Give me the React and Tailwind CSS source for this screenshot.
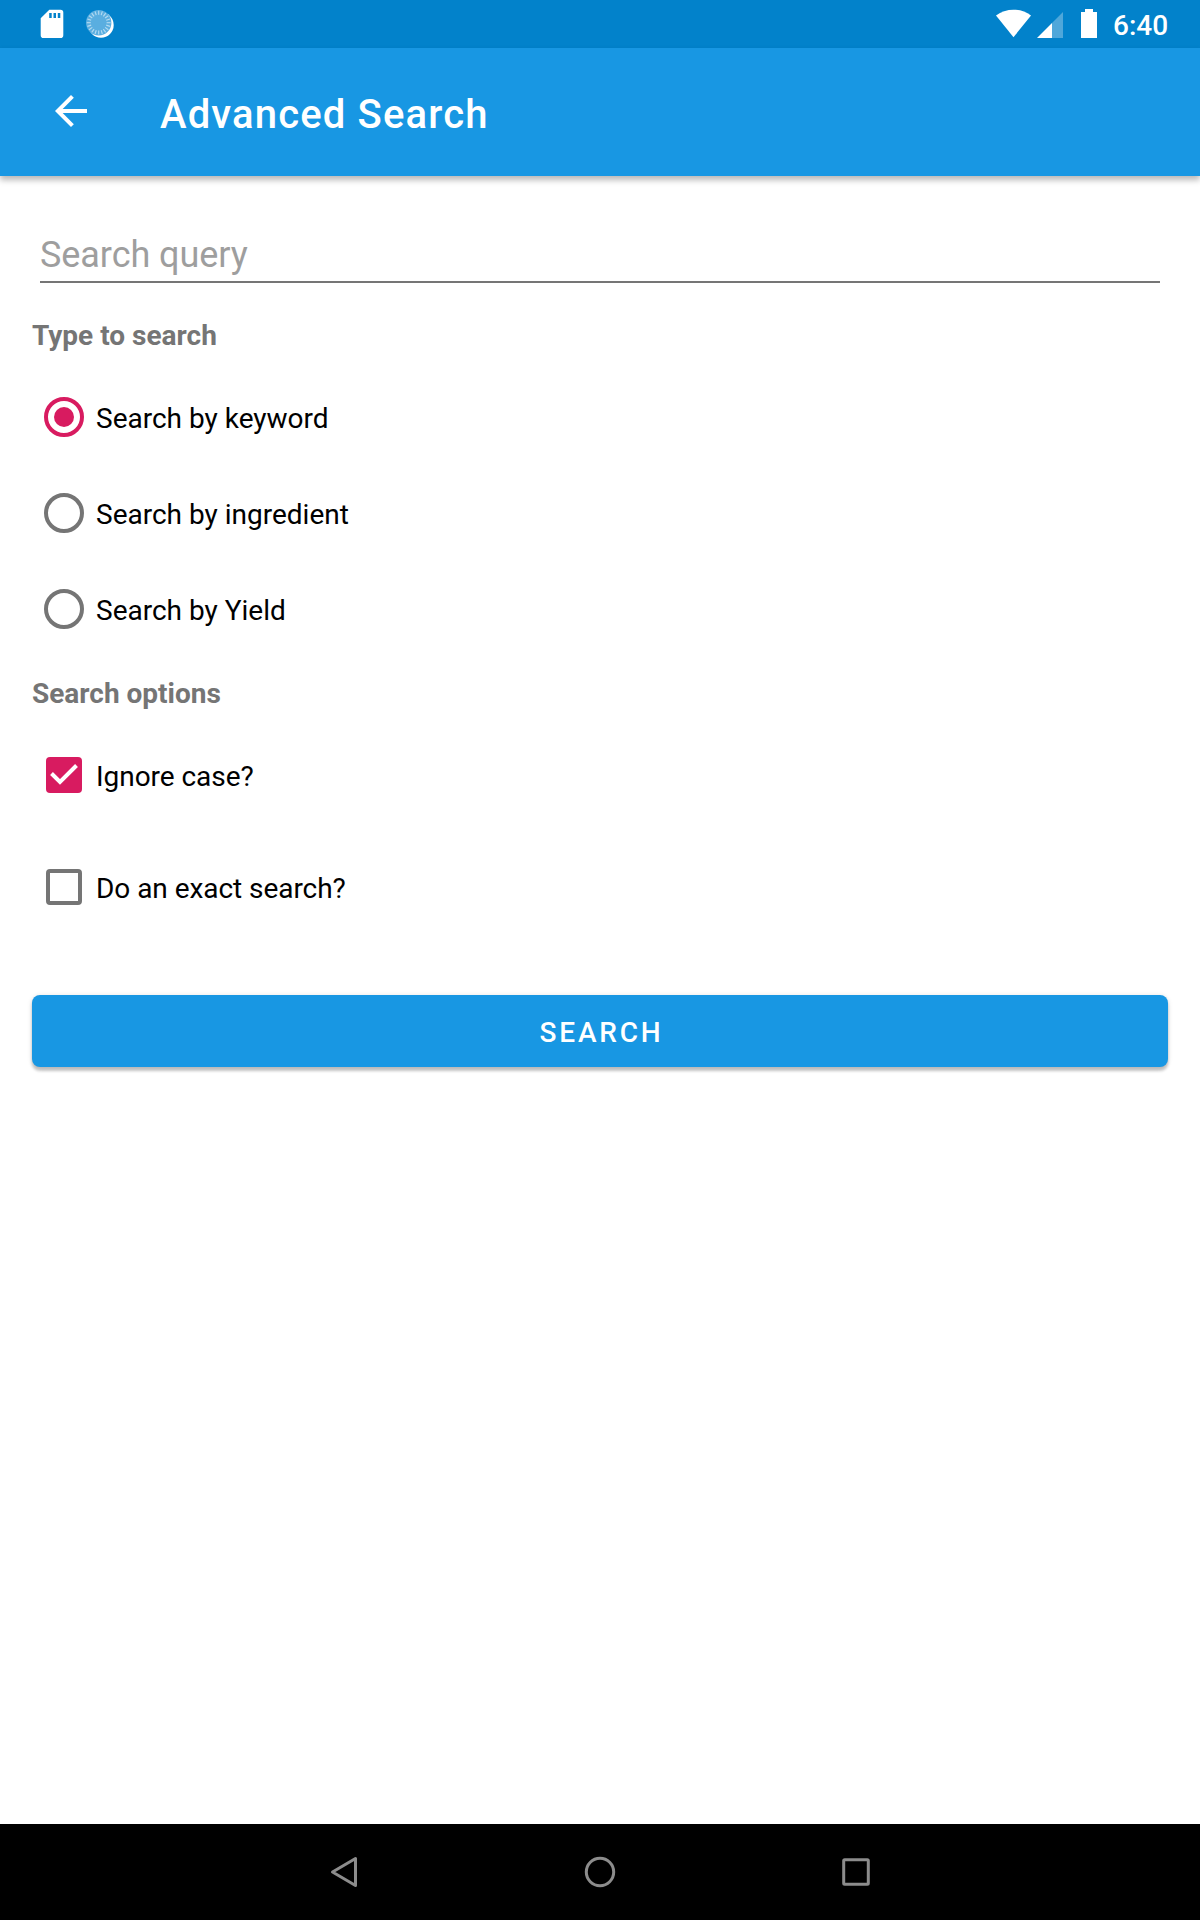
import React from "react";

const spokes = Array.from({ length: 20 }, (_, i) => i * 18);

function StatusBar() {
  return (
    <header className="flex h-12 items-start justify-between bg-[#0282cb] text-white">
      <div className="flex pl-10">
        <svg className="h-12 w-6" viewBox="0 0 24 48">
          <path
            fill="#fff"
            fillRule="evenodd"
            d="M9.3 9.700H20.500a2.800 2.800 0 0 1 2.800 2.800V35.300a2.800 2.800 0 0 1-2.800 2.800H3.500a2.800 2.800 0 0 1-2.800-2.800V18.300ZM9.200 13v5h2.500v-5ZM13.500 13v5h2.500v-5ZM17.800 13v5h2.500v-5Z"
          />
        </svg>
        <svg className="ml-5 h-12 w-8" viewBox="0 0 32 48">
          <circle cx="17" cy="25" r="12.700" fill="#fff" />
          <circle cx="14.700" cy="22.700" r="12.700" fill="#5aaee0" />
          {spokes.map((a) => (
            <path key={a} d="M14.700 10.800v4" stroke="#b5dbf1" strokeWidth="1.100" transform={`rotate(${a} 14.700 22.700)`} />
          ))}
        </svg>
      </div>
      <div className="flex pr-8">
        <svg className="h-12 w-[104px]" viewBox="0 0 104 48">
          <path d="M17.500 37.200 0 15.600C5 11.700 11 9.700 17.500 9.700S30 11.700 35 15.600Z" fill="#fff" />
          <path d="M56 23v15H41Z" fill="#fff" />
          <path d="M67 12v26H56V23Z" fill="#4fa7da" />
          <path d="M89 9h8v3h4v26H85V12h4Z" fill="#fff" />
        </svg>
        <span className="ml-[13px] w-[55px] whitespace-nowrap text-[28px] font-medium leading-[51px]">6:40</span>
      </div>
    </header>
  );
}

function AppBar() {
  return (
    <div className="relative flex h-32 items-center bg-[#1897e3] text-white shadow-[0_4px_6px_rgba(0,0,0,0.28)]">
      <svg className="mb-0.5 ml-[47px] size-12" viewBox="0 0 24 24" fill="#fff">
        <path d="M20 11H7.830l5.590-5.590L12 4l-8 8 8 8 1.410-1.410L7.830 13H20v-2z" />
      </svg>
      <h1 className="ml-[65px] pt-1.5 text-[40px] font-medium leading-[48px] tracking-[1.150px]">Advanced Search</h1>
    </div>
  );
}

function Radio({ label, checked }) {
  return (
    <label className="flex h-24 items-center pl-3">
      <svg className="size-10" viewBox="0 0 40 40">
        <circle cx="20" cy="20" r="18" fill="none" stroke={checked ? "#d81b60" : "#757575"} strokeWidth="4" />
        {checked && <circle cx="20" cy="20" r="10" fill="#d81b60" />}
      </svg>
      <span className="ml-3 pt-1 text-[28px] leading-8 text-black">{label}</span>
    </label>
  );
}

function Checkbox({ label, checked }) {
  return (
    <label className="flex h-28 items-center pl-3.5">
      <svg className="size-9" viewBox="0 0 36 36">
        {checked ? (
          <>
            <rect width="36" height="36" rx="4" fill="#d81b60" />
            <path d="m5.500 16.500 8.500 8.500L30.500 8.500" fill="none" stroke="#fff" strokeWidth="4" />
          </>
        ) : (
          <rect x="2" y="2" width="32" height="32" rx="2" fill="none" stroke="#757575" strokeWidth="4" />
        )}
      </svg>
      <span className="ml-3.5 pt-1 text-[28px] leading-8 tracking-[-0.050px] text-black">{label}</span>
    </label>
  );
}

function NavBar() {
  return (
    <nav className="flex h-24 items-center justify-center gap-52 bg-black">
      <svg className="size-12" viewBox="0 0 48 48">
        <path d="M35.500 10.500v27L12.500 24Z" fill="none" stroke="#8c8c8c" strokeWidth="3" strokeLinejoin="round" />
      </svg>
      <svg className="size-12" viewBox="0 0 48 48">
        <circle cx="24" cy="24" r="13.700" fill="none" stroke="#8c8c8c" strokeWidth="3" />
      </svg>
      <svg className="size-12" viewBox="0 0 48 48">
        <rect x="11.700" y="11.700" width="24.600" height="24.600" rx="1" fill="none" stroke="#8c8c8c" strokeWidth="3" />
      </svg>
    </nav>
  );
}

export default function App() {
  return (
    <div className="flex h-[1920px] w-[1200px] flex-col bg-white font-['Roboto',sans-serif]">
      <StatusBar />
      <AppBar />
      <main className="flex grow flex-col px-8">
        <div className="mx-2 flex h-[107px] items-center border-b-2 border-[#757575] pt-[52px] text-[36px] leading-10 tracking-[-0.060px] text-[#9e9e9e]">
          Search query
        </div>
        <h2 className="mt-5 flex h-[66px] items-center text-[28px] font-bold leading-8 text-[#757575]">Type to search</h2>
        <Radio label="Search by keyword" checked />
        <Radio label="Search by ingredient" />
        <Radio label="Search by Yield" />
        <h2 className="flex h-[62px] items-center pt-[11px] text-[28px] font-bold leading-8 text-[#757575]">Search options</h2>
        <Checkbox label="Ignore case?" checked />
        <Checkbox label="Do an exact search?" />
        <button className="mt-[52px] h-[72px] rounded-lg bg-[#1897e3] pl-[3px] pt-1 text-[28px] font-medium leading-8 tracking-[2.800px] text-white shadow-[0_4px_3px_rgba(0,0,0,0.2),0_1px_5px_rgba(0,0,0,0.15)]">
          SEARCH
        </button>
      </main>
      <NavBar />
    </div>
  );
}
